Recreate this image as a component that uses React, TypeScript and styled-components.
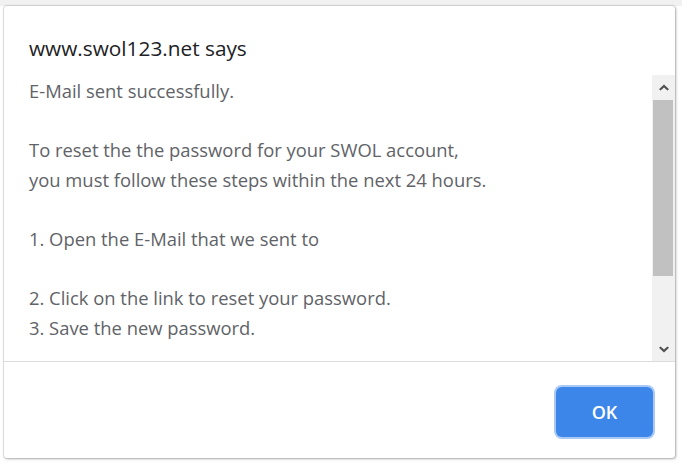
import React from 'react';
import styled, { createGlobalStyle } from 'styled-components';

const GlobalStyle = createGlobalStyle`
  html, body {
    margin: 0;
    padding: 0;
  }
  body {
    width: 682px;
    height: 465px;
    overflow: hidden;
    background: linear-gradient(#f1f1f1 0 6px, #ffffff 6px);
    font-family: "Open Sans", "Noto Sans", sans-serif;
  }
`;

const Dialog = styled.div`
  margin: 6px 0 0 4px;
  width: 671px;
  height: 452px;
  box-sizing: border-box;
  background: #ffffff;
  border-radius: 3px;
  box-shadow: 0 0 1px 1px rgba(0, 0, 0, 0.12), 1px 1px 3px rgba(0, 0, 0, 0.25);
  display: flex;
  flex-direction: column;
  overflow: hidden;
`;

const Header = styled.div`
  height: 69px;
  box-sizing: border-box;
  padding: 27px 0 0 25px;
`;

const Title = styled.h1`
  margin: 0;
  font-size: 20.8px;
  font-weight: 400;
  line-height: 30px;
  color: #202124;
`;

const Body = styled.div`
  height: 286px;
  display: flex;
  border-bottom: 1px solid #dcdcdc;
`;

const Message = styled.div`
  flex: 1;
  overflow: hidden;
  padding: 1px 0 0 25px;
  font-size: 18.4px;
  line-height: 29.6px;
  color: #5f6368;
  white-space: pre-wrap;
`;

const ScrollBar = styled.div`
  width: 23px;
  display: flex;
  flex-direction: column;
  background: #f1f1f1;
`;

const ScrollButton = styled.div<{ $height: number }>`
  height: ${(p) => p.$height}px;
  display: flex;
  align-items: center;
  justify-content: center;
  color: #505050;
`;

const Thumb = styled.div`
  height: 176px;
  margin: 0 2px 0 1px;
  background: #c1c1c1;
`;

const Track = styled.div`
  flex: 1;
`;

const Footer = styled.div`
  flex: 1;
  display: flex;
  justify-content: flex-end;
  align-items: flex-start;
  padding: 25px 22px 0 0;
`;

const OkButton = styled.button`
  width: 97px;
  height: 50px;
  border: none;
  border-radius: 6px;
  background: #3c86ea;
  box-shadow: 0 0 0 2px #a9c8f5;
  color: #ffffff;
  font-family: "Open Sans", "Noto Sans", sans-serif;
  font-size: 18px;
  font-weight: 600;
  cursor: pointer;
`;

const Chevron: React.FC<{ down?: boolean }> = ({ down }) => (
  <svg width="10" height="7" viewBox="0 0 10 7" style={down ? { transform: 'rotate(180deg)' } : undefined}>
    <path d="M0 5.2 L5 0.5 L10 5.2 L8.4 6.6 L5 3.4 L1.6 6.6 Z" fill="currentColor" />
  </svg>
);

const text = `E-Mail sent successfully.

To reset the the password for your SWOL account,
you must follow these steps within the next 24 hours.

1. Open the E-Mail that we sent to

2. Click on the link to reset your password.
3. Save the new password.`;

const App: React.FC = () => {
  return (
    <>
      <GlobalStyle />
      <Dialog role="alertdialog">
        <Header>
          <Title>www.swol123.net says</Title>
        </Header>
        <Body>
          <Message>{text}</Message>
          <ScrollBar>
            <ScrollButton $height={25}>
              <Chevron />
            </ScrollButton>
            <Thumb />
            <Track />
            <ScrollButton $height={24}>
              <Chevron down />
            </ScrollButton>
          </ScrollBar>
        </Body>
        <Footer>
          <OkButton>OK</OkButton>
        </Footer>
      </Dialog>
    </>
  );
};

export default App;
